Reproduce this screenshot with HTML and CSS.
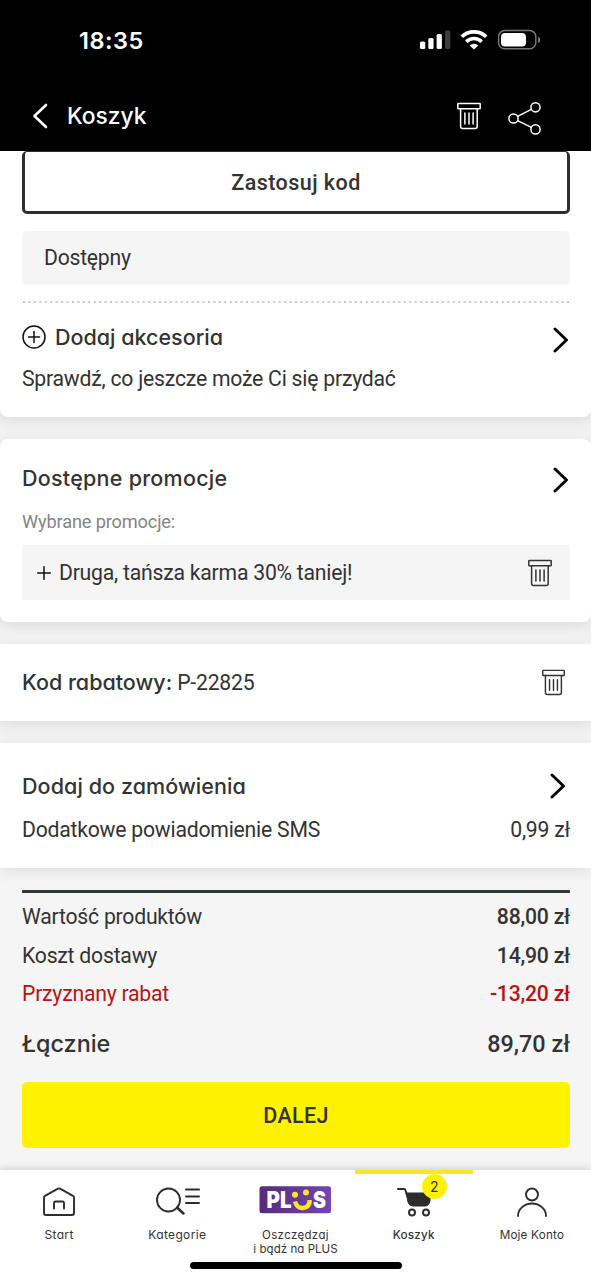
FILE: index.html
```html
<!DOCTYPE html>
<html lang="pl">
<head>
<meta charset="utf-8">
<title>Koszyk</title>
<link rel="stylesheet" href="styles.css">
</head>
<body>
<svg class="defs" width="0" height="0">
  <symbol id="trash" viewBox="0 0 26 28"><g fill="none" stroke="currentColor" stroke-width="1.5" stroke-linejoin="round" stroke-linecap="round"><rect x="1.8" y="1.4" width="22.4" height="5.4" rx=".6"/><path d="M4.6 6.8V24.4q0 2 2 2h12.600q2 0 2-2V6.800M8.900 11v11M13 11v11M17.100 11v11"/></g></symbol>
  <symbol id="chevron" viewBox="0 0 16 26"><path d="M2 2 13.500 13 2 24" fill="none" stroke="#000" stroke-width="2.900" stroke-linecap="round" stroke-linejoin="round"/></symbol>
</svg>
<div class="screen">
  <header class="top">
    <div class="status">
      <span class="clock">18:35</span>
      <svg class="signals" width="120" height="24" viewBox="0 0 120 24">
        <g fill="#fff"><rect x="0" y="12.500" width="5.300" height="7.500" rx="1.500"/><rect x="8.300" y="9" width="5.300" height="11" rx="1.500"/><rect x="16.600" y="5" width="5.300" height="15" rx="1.500"/><rect x="25" y="1.500" width="5.300" height="18.500" rx="1.500" fill="#3d3d3d"/></g>
        <g fill="none" stroke="#fff" stroke-width="3.600"><path d="M41.800 7.800a17.500 17.500 0 0 1 24.400 0"/><path d="M46.300 12.700a11 11 0 0 1 15.400 0"/></g>
        <path d="M49.700 16.400a6.300 6.300 0 0 1 8.600 0L54 20.600z" fill="#fff"/>
        <rect x="78.600" y="1.600" width="37.200" height="18.200" rx="6" fill="none" stroke="#777" stroke-width="1.500"/><rect x="81" y="4" width="25" height="13.500" rx="4" fill="#fff"/><path d="M118 7.500q5 3.300 0 6.600z" fill="#777"/>
      </svg>
    </div>
    <div class="bar">
      <svg class="back" width="16" height="26" viewBox="0 0 16 26"><path d="M14 2 2.500 13 14 24" fill="none" stroke="#fff" stroke-width="2.600" stroke-linecap="round" stroke-linejoin="round"/></svg>
      <h1 class="title geo">Koszyk</h1>
      <svg class="bar-trash" width="26" height="28"><use href="#trash"/></svg>
      <svg class="share" width="34" height="34" viewBox="0 0 34 34"><g fill="none" stroke="#fff" stroke-width="1.500"><circle cx="6.500" cy="17.500" r="4.600"/><circle cx="28.500" cy="6.300" r="4.600"/><circle cx="28.500" cy="28.400" r="4.600"/><path d="M10.600 15.400 24.400 8.400M10.600 19.600 24.400 26.400"/></g></svg>
    </div>
  </header>

  <main class="content">
    <section class="card first">
      <button class="outline-btn">Zastosuj kod</button>
      <div class="availability">Dostępny</div>
      <svg class="dots" width="548" height="2"><path d="M1 1H548" stroke="#b4b4b4" stroke-width="1.300" stroke-dasharray="2 3.440"/></svg>
      <div class="row acc">
        <svg width="24" height="24" viewBox="0 0 24 24"><g fill="none" stroke="#111" stroke-width="1.500" stroke-linecap="round"><circle cx="12" cy="12" r="11"/><path d="M6.500 12h11M12 6.500v11"/></g></svg>
        <h2 class="heading geo h-acc">Dodaj akcesoria</h2>
        <svg class="chev" width="16" height="26"><use href="#chevron"/></svg>
      </div>
      <p class="text t-acc">Sprawdź, co jeszcze może Ci się przydać</p>
    </section>

    <section class="card promos">
      <div class="row"><h2 class="heading geo h-promo">Dostępne promocje</h2><svg class="chev low" width="16" height="26"><use href="#chevron"/></svg></div>
      <p class="hint">Wybrane promocje:</p>
      <div class="promo">
        <svg width="14" height="14" viewBox="0 0 14 14"><path d="M.7 7h12.600M7 .7v12.600" stroke="#111" stroke-width="1.500" stroke-linecap="round"/></svg>
        <span class="text t-promo">Druga, tańsza karma 30% taniej!</span>
        <svg class="promo-trash" width="26" height="28"><use href="#trash"/></svg>
      </div>
    </section>

    <section class="card code row">
      <p class="text"><span class="heading geo h-code">Kod rabatowy:</span> <span>P-22825</span></p>
      <svg class="code-trash" width="25" height="27"><use href="#trash"/></svg>
    </section>

    <section class="card order">
      <div class="row"><h2 class="heading geo h-order">Dodaj do zamówienia</h2><svg class="chev inset" width="16" height="26"><use href="#chevron"/></svg></div>
      <div class="row text sms"><span>Dodatkowe powiadomienie SMS</span><span>0,99 zł</span></div>
    </section>

    <section class="summary">
      <div class="row text line"><span>Wartość produktów</span><b>88,00 zł</b></div>
      <div class="row text line"><span>Koszt dostawy</span><b>14,90 zł</b></div>
      <div class="row text line red"><span>Przyznany rabat</span><b>-13,20 zł</b></div>
      <div class="row total"><span class="geo h-total">Łącznie</span><b>89,70 zł</b></div>
      <button class="next">DALEJ</button>
    </section>
  </main>

  <nav class="tabs geo">
    <a class="tab"><span class="icon"><svg width="34" height="30" viewBox="0 0 34 30"><g fill="none" stroke="#2d2d2d" stroke-width="1.900" stroke-linejoin="round" stroke-linecap="round"><path d="M2 10.500q0-1.200 1-1.700L16 1.600q1-.5 2 0l13 7.200q1 .5 1 1.700V26q0 2-2 2H4q-2 0-2-2z"/><path d="M12 21.500V16q0-1.500 1.500-1.500h7q1.500 0 1.500 1.500v5.500"/></g></svg></span><span class="lab l-start">Start</span></a>
    <a class="tab"><span class="icon"><svg width="46" height="30" viewBox="0 0 46 30"><g fill="none" stroke="#2d2d2d" stroke-width="1.900" stroke-linecap="round"><circle cx="14.500" cy="13" r="11.500"/><path d="m23 20.500 6.500 6" stroke-width="2.500"/><path d="M32 2.500h13M32 9.500h13M32 16h13"/></g></svg></span><span class="lab l-kat">Kategorie</span></a>
    <a class="tab"><span class="icon"><svg width="72" height="28" viewBox="0 0 72 28">
      <defs><linearGradient id="violet"><stop offset="0" stop-color="#572b79"/><stop offset="1" stop-color="#7445b4"/></linearGradient></defs>
      <rect x=".5" y=".3" width="71.500" height="27" rx="2.500" fill="url(#violet)"/>
      <text x="7.500" y="22.300" class="logo-text" textLength="25" lengthAdjust="spacingAndGlyphs">PL</text><text x="54" y="22.300" class="logo-text" textLength="13" lengthAdjust="spacingAndGlyphs">S</text>
      <g fill="#ffe527"><circle cx="36" cy="8.700" r="3"/><circle cx="47" cy="6.500" r="3"/></g><path d="M36 15.500q2 7 8.200 6.500 6.500-.5 6.500-8" fill="none" stroke="#ffe527" stroke-width="4.500"/>
    </svg></span><span class="lab l-plus">Oszczędzaj<br><span class="l-plus2">i bądź na PLUS</span></span></a>
    <a class="tab active"><span class="icon"><svg width="36" height="30" viewBox="0 0 36 30"><g stroke="#2d2d2d"><path d="M2 2h6q1.200 0 1.500 1.200L11 8" fill="none" stroke-width="2" stroke-linecap="round"/><path d="M10 6h24v8q-1 5-5 5H17q-4 0-5-4z" fill="#2d2d2d" stroke-width="1"/><g fill="#fff" stroke-width="2"><circle cx="16" cy="25.500" r="3"/><circle cx="30" cy="25.500" r="3"/></g></g></svg><span class="badge">2</span></span><span class="lab l-kosz">Koszyk</span></a>
    <a class="tab"><span class="icon"><svg width="32" height="30" viewBox="0 0 32 30"><g fill="none" stroke="#2d2d2d" stroke-width="1.900" stroke-linecap="round"><circle cx="16" cy="7.500" r="6"/><path d="M2 29a14 12.500 0 0 1 28 0"/></g></svg></span><span class="lab l-konto">Moje Konto</span></a>
    <span class="home"></span>
  </nav>
</div>
</body>
</html>
```
FILE: styles.css
```css
* { box-sizing: border-box; }
body, h1, h2, p { margin: 0; }
body { width: 591px; height: 1280px; overflow: hidden; background: #f5f5f5; color: #333; font-family: Roboto, sans-serif; }
svg { display: block; flex: none; }
.defs { position: absolute; }
button { font: inherit; color: inherit; display: block; width: 100%; padding: 0; }
.screen { display: flex; flex-direction: column; height: 1280px; }
.geo { font-family: Inter, "Noto Sans", sans-serif; font-feature-settings: "cv11" 1; }
.row { display: flex; align-items: center; justify-content: space-between; }

.top { height: 151px; background: #000; color: #fff; flex: none; }
.status { height: 80px; padding: 2px 48px 0 79px; display: flex; align-items: center; justify-content: space-between; }
.clock { font: 600 23.500px Inter, sans-serif; letter-spacing: .5px; margin-bottom: 2px; }
.signals { margin-right: 3px; }
.bar { height: 71px; display: flex; align-items: center; padding: 0 50px 0 32px; }
.title { font-size: 22.800px; font-weight: 500; margin-left: 19px; line-height: 34px; flex: 1; }
.bar-trash { margin-right: 25px; }
.share { margin-top: 5px; }

.content { flex: 1; min-height: 0; background: #f2f2f2; }
.card { position: relative; background: #fff; padding: 0 21px 0 22px; box-shadow: 0 4px 14px rgba(0,0,0,.09); border-radius: 8px; margin-bottom: 22px; }
.first { height: 266px; border-radius: 0 0 8px 8px; }
.outline-btn { height: 63px; padding-top: 1px; border: 3px solid #2d2f2f; border-top-width: 1px; border-radius: 5px; background: #fff; font-size: 21.500px; font-weight: 500; letter-spacing: .45px; }
.availability { margin-top: 17px; height: 54px; line-height: 54px; padding-left: 22px; background: #f5f5f5; border-radius: 5px; font-size: 21.200px; letter-spacing: -.25px; }
.dots { margin-top: 16px; }
.acc { margin-top: 19px; height: 30px; }
.heading { font-size: 21.500px; font-weight: 500; line-height: 30px; letter-spacing: 0; white-space: nowrap; }
.acc .heading { flex: 1; margin-left: 9px; }
.acc .chev { position: relative; top: 3px; }
.chev { margin-right: 1px; }
.chev.low { position: relative; top: 2px; }
.text { font-size: 21.200px; letter-spacing: -.23px; line-height: 28px; white-space: nowrap; }
.t-acc { margin-top: 13px; }

.promos { height: 183px; padding-top: 24px; }
.h-promo { letter-spacing: .25px; }
.hint { color: #858585; font-size: 18.200px; letter-spacing: -.15px; line-height: 26px; margin-top: 16px; }
.promo { height: 55px; margin-top: 10px; background: #f5f5f5; display: flex; align-items: center; padding: 0 17px 0 15px; }
.t-promo { margin-left: 8px; flex: 1; }
.code { height: 77px; border-radius: 0; padding-bottom: 1px; }
.code-trash { margin-right: 4px; }
.order { height: 125px; padding-top: 28px; border-radius: 0; margin-bottom: 0; }
.h-order { letter-spacing: .08px; }
.chev.inset { margin-right: 4px; }
.sms { margin-top: 15px; }

.summary { height: 302px; background: #f5f5f5; padding: 22px 21px 0 22px; }
.summary::before { content: ""; display: block; height: 3px; background: #343837; margin-bottom: 5px; }
.line { height: 38.500px; }
.line b { font-weight: 500; }
.red { color: #b81414; }
.total { height: 50px; margin-top: 5px; font-size: 23.400px; }
.total span, .total b { font-weight: 500; }
.next { margin-top: 13px; height: 66px; padding-top: 2px; border: 0; border-radius: 5px; background: #fff200; font-size: 21.500px; font-weight: 500; letter-spacing: .3px; }

.tabs { position: relative; height: 110px; flex: none; background: #fff; display: grid; grid-template-columns: repeat(5, 1fr); box-shadow: 0 -2px 7px rgba(0,0,0,.14); }
.tab { border-top: 4px solid transparent; padding-top: 13px; display: flex; flex-direction: column; align-items: center; font-size: 12px; line-height: 14px; text-align: center; }
.tab:nth-child(3) { padding-top: 12px; }
.tab:nth-child(3) .lab { margin-top: 6px; }
.tab.active { border-color: #f5e829; }
.icon { height: 36px; position: relative; }
.lab { margin-top: 5px; letter-spacing: .35px; white-space: nowrap; }
.l-plus { font-size: 11.500px; }
.l-plus2 { letter-spacing: .05px; }
.l-konto, .l-kosz { font-size: 11.700px; letter-spacing: .2px; }
.active .lab { font-weight: 500; }
.badge { position: absolute; left: 26px; top: -13px; width: 25px; height: 25px; border-radius: 50%; background: #fff200; font-size: 14px; line-height: 25px; }
.logo-text { font: 900 22.500px Inter, sans-serif; fill: #fff; }
.home { position: absolute; left: 190px; top: 92px; width: 212px; height: 7px; border-radius: 4px; background: #000; }
```
